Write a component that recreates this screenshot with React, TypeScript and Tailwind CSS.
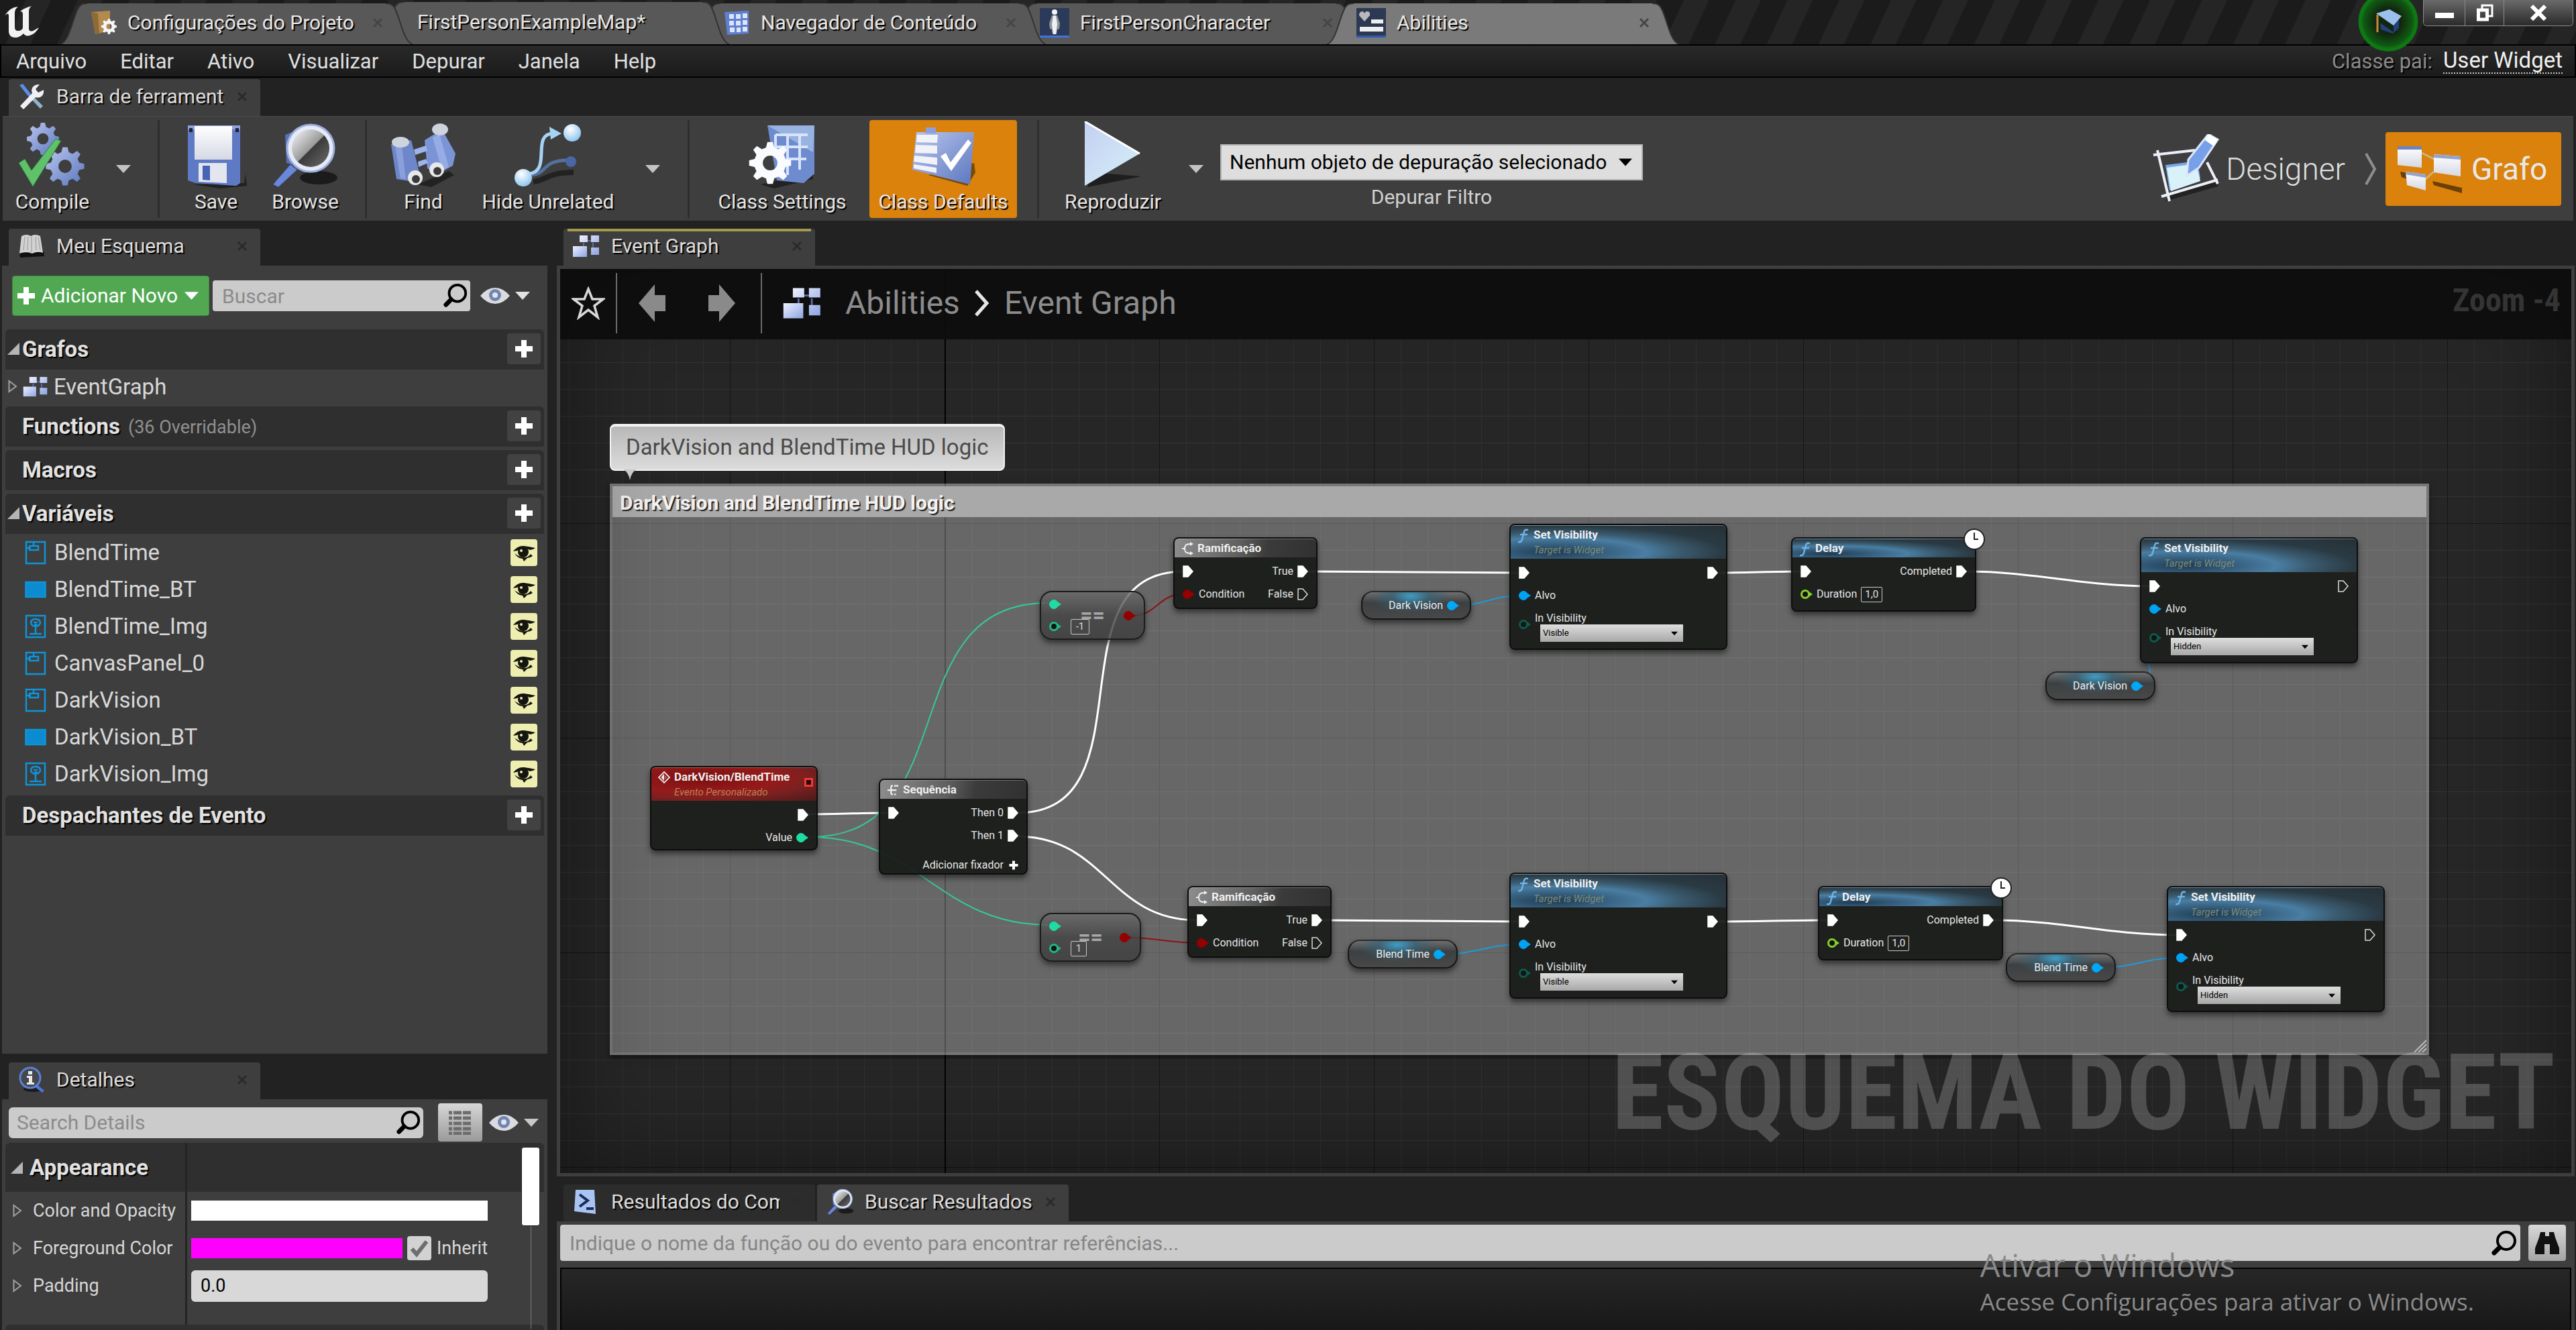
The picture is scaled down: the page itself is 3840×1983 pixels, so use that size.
import React from "react";

type Kids = { children?: React.ReactNode };

const shadowText = "[text-shadow:2px_2px_1px_#000]";

/* ---------- shared gradients ---------- */
function Gradients() {
  return (
    <svg className="absolute size-0" aria-hidden="true">
      <defs>
        <linearGradient id="steel" x1="0" y1="0" x2="1" y2="1">
          <stop offset="0" stopColor="#b9c6ee" />
          <stop offset="1" stopColor="#5c77bf" />
        </linearGradient>
        <linearGradient id="pale" x1="0" y1="0" x2="1" y2="1">
          <stop offset="0" stopColor="#eef2ff" />
          <stop offset="1" stopColor="#8ea4e2" />
        </linearGradient>
        <linearGradient id="ice" x1="0" y1="0" x2="1" y2="1">
          <stop offset="0" stopColor="#c3cff2" />
          <stop offset="1" stopColor="#d6f2f8" />
        </linearGradient>
        <linearGradient id="sheet" x1="0" y1="0" x2="0" y2="1">
          <stop offset="0" stopColor="#ffffff" />
          <stop offset="1" stopColor="#d5d8e4" />
        </linearGradient>
        <linearGradient id="lens" x1="0" y1="0" x2="1" y2="1">
          <stop offset="0" stopColor="#fafafa" />
          <stop offset="0.5" stopColor="#9a9a9a" />
          <stop offset="0.52" stopColor="#3b3b3b" />
          <stop offset="1" stopColor="#6d6d6d" />
        </linearGradient>
        <radialGradient id="ball" cx="0.4" cy="0.3" r="0.7">
          <stop offset="0" stopColor="#ffffff" />
          <stop offset="1" stopColor="#8ec6ef" />
        </radialGradient>
        <radialGradient id="glow" cx="0.5" cy="0.5" r="0.5">
          <stop offset="0.45" stopColor="#12260f" />
          <stop offset="0.85" stopColor="#0f5a12" />
          <stop offset="1" stopColor="#128a17" />
        </radialGradient>
      </defs>
    </svg>
  );
}

const GEAR =
  "M44 4h12l3 12 9 4 11-7 8 8-7 11 4 9 12 3v12l-12 3-4 9 7 11-8 8-11-7-9 4-3 12H44l-3-12-9-4-11 7-8-8 7-11-4-9-12-3V44l12-3 4-9-7-11 8-8 11 7 9-4zM50 34a16 16 0 1 0 0 32a16 16 0 1 0 0-32z";

function CompileIcon() {
  return (
    <svg viewBox="0 0 104 100" className="h-[100px] w-[104px]" aria-hidden="true">
      <g transform="translate(12 0) scale(.52)"><path d={GEAR} fill="url(#steel)" fillRule="evenodd" /></g>
      <g transform="translate(40 36) scale(.62)"><path d={GEAR} fill="url(#steel)" fillRule="evenodd" /></g>
      <path d="M2 62l9-6 10 17 36-47 8 3L23 97z" fill="#5fc26a" stroke="#2c7d3a" />
    </svg>
  );
}
function SaveIcon() {
  return (
    <svg viewBox="0 0 92 96" className="h-[96px] w-[92px]" aria-hidden="true">
      <path d="M12 90l76-2 2-14 2 18-40 4z" fill="#222" />
      <path d="M4 2h78v86l-6 4-60-4-12-4z" fill="#5f7ac4" />
      <path d="M4 2h78v6H4z" fill="#8da3de" />
      <path d="M14 3h56v50H14z" fill="url(#sheet)" />
      <path d="M20 58h42v30l-42-2z" fill="#e3e6ee" />
      <path d="M26 62h11v22l-11-1z" fill="#4763b3" />
      <path d="M6 6h5v6H6zM75 6h5v6h-5z" fill="#223" />
    </svg>
  );
}
function BrowseIcon({ className = "h-[98px] w-[104px]" }: { className?: string }) {
  return (
    <svg viewBox="0 0 104 98" className={className} aria-hidden="true">
      <ellipse cx="72" cy="82" rx="28" ry="10" fill="#1b1b1b" />
      <path d="M4 92L30 62l10 8L12 96z" fill="#6b87d8" stroke="#3c4f92" />
      <path d="M22 18l10-4v48l-8-2z" fill="#5871b4" />
      <circle cx="60" cy="38" r="35" fill="#e6ebfa" stroke="#9fb0dd" strokeWidth="3" />
      <circle cx="60" cy="38" r="28" fill="url(#lens)" />
    </svg>
  );
}
function FindIcon() {
  return (
    <svg viewBox="0 0 104 98" className="h-[98px] w-[104px]" aria-hidden="true">
      <path d="M44 92l46-20 8 6-34 18z" fill="#222" />
      <path d="M4 32l30-6 12 48-8 14-26-4z" fill="#6e87c9" />
      <path d="M10 36l10-2 6 50-8-1z" fill="#9db1ea" opacity=".6" />
      <path d="M54 26l26-16 20 36-4 18-22 12-16-8z" fill="#7b94d6" />
      <path d="M66 22l10-6 14 50-10 5z" fill="#a9bcf0" opacity=".6" />
      <ellipse cx="18" cy="29" rx="13" ry="8" fill="#cfd3dd" />
      <ellipse cx="77" cy="10" rx="12" ry="9" fill="#cfd3dd" />
      <path d="M38 40l18-6 2 8-18 6zM44 58l12-4 3 6-14 6z" fill="#9fb3ea" />
      <circle cx="40" cy="82" r="11" fill="#e8e8ea" /><circle cx="41" cy="84" r="6" fill="#3a3a3a" />
      <circle cx="72" cy="70" r="11" fill="#e8e8ea" /><circle cx="73" cy="72" r="6" fill="#3a3a3a" />
    </svg>
  );
}
function HideIcon() {
  return (
    <svg viewBox="0 0 104 98" className="h-[98px] w-[104px]" aria-hidden="true">
      <path d="M30 88c20-2 20-14 60-14" stroke="#222" strokeWidth="8" fill="none" />
      <path d="M28 78c22-2 16-22 52-22" stroke="#55709f" strokeWidth="5" fill="none" />
      <circle cx="86" cy="58" r="8" fill="#4b66a4" />
      <path d="M24 76c34-4 2-60 36-60" stroke="#a5d3f4" strokeWidth="5" fill="none" />
      <path d="M54 6l18 10-16 9z" fill="#a5d3f4" />
      <circle cx="15" cy="82" r="13" fill="url(#ball)" />
      <circle cx="88" cy="15" r="13" fill="url(#ball)" />
    </svg>
  );
}
function SettingsIcon() {
  return (
    <svg viewBox="0 0 104 98" className="h-[98px] w-[104px]" aria-hidden="true">
      <path d="M20 92l78-20v12L40 98z" fill="#222" />
      <path d="M30 4h70v72L84 90 44 86z" fill="#6f8bcf" />
      <path d="M30 4h70l-2 40z" fill="#a9c4ea" opacity=".7" />
      <path d="M42 18h48M42 18v34M60 18v60M78 18v52M42 36h48M60 54h28" stroke="#d8e4fa" strokeWidth="4" fill="none" />
      <g transform="translate(0 26) scale(.68)"><path d={GEAR} fill="#fafbff" fillRule="evenodd" /></g>
    </svg>
  );
}
function DefaultsIcon() {
  return (
    <svg viewBox="0 0 104 92" className="h-[92px] w-[104px]" aria-hidden="true">
      <path d="M30 72l68-18 2 14-12 20z" fill="#7a4a08" />
      <path d="M12 8h86l-6 78L6 64z" fill="url(#steel)" />
      <path d="M26 1h15v9H26z" fill="#8ba0dc" />
      <path d="M13 12h31l-1 12-31-1zM11 27l32 1v12l-33-1zM9 43l34 3v11L8 52zM8 56l34 5v8L8 62z" fill="#f2f3f8" />
      <path d="M48 44l8-5 7 14 26-34 5 5-30 42z" fill="#fff" />
    </svg>
  );
}
function PlayIcon() {
  return (
    <svg viewBox="0 0 92 100" className="h-[100px] w-[92px]" aria-hidden="true">
      <path d="M8 98l8-22 72 6z" fill="#1e1e1e" />
      <path d="M4 0l82 48L4 96z" fill="url(#ice)" />
      <path d="M4 0l82 48" stroke="#fff" strokeWidth="3" />
    </svg>
  );
}
function DesignerIcon() {
  return (
    <svg viewBox="0 0 104 104" className="h-[104px] w-[104px]" aria-hidden="true">
      <path d="M20 100l78-22v-8L26 90z" fill="#222" />
      <path d="M20 46l48-6 4 26-46 18z" fill="#79a8ea" />
      <path d="M22 50l44-6 6 26-44 15z" fill="#d9f2fa" />
      <path d="M2 31l62-7M8 24l18 76M14 93l84-25M82 42l16 32" stroke="#eceff8" strokeWidth="4" />
      <path d="M54 38L84 0l14 8-28 42-18 12z" fill="#77a0e8" stroke="#dbe6fb" strokeWidth="3" />
      <path d="M84 0l14 8-6 10-13-9z" fill="#fff" />
    </svg>
  );
}
function GrafoIcon() {
  return (
    <svg viewBox="0 0 100 72" className="h-[72px] w-[100px]" aria-hidden="true">
      <path d="M54 54l44 10v8L56 60zM6 40l24 4v12L8 48z" fill="#6b3f05" />
      <path d="M38 12l20 10M56 40L38 56" stroke="#c9b48a" strokeWidth="3" />
      <path d="M2 2h36v32L2 30z" fill="url(#sheet)" /><path d="M2 2h36v5H2z" fill="#6f83bd" />
      <path d="M56 14l40 3v30l-40-6z" fill="url(#sheet)" /><path d="M56 14l40 3v5l-40-3z" fill="#93a3cf" />
      <path d="M14 40l30 4v24l-28-8z" fill="url(#sheet)" /><path d="M14 40l30 4v5l-30-5z" fill="#93a3cf" />
    </svg>
  );
}
function GraphIcon({ className = "h-9 w-10" }: { className?: string }) {
  return (
    <svg viewBox="0 0 40 34" className={className} aria-hidden="true">
      <path d="M16 9h16M30 12v12M16 12v10" stroke="#5b6ea8" strokeWidth="2" />
      <path d="M10 1h12v10H10zM27 1h12v10H27zM27 19h12v11H27z" fill="url(#pale)" />
      <path d="M0 17h21v16H0z" fill="url(#pale)" />
    </svg>
  );
}
function ToolsIcon() {
  return (
    <svg viewBox="0 0 40 40" className="size-10" aria-hidden="true">
      <path d="M2 3l5-2 15 19-4 3z" fill="#5d8ee6" />
      <path d="M18 22l4-3 15 15-4 4z" fill="#8fb4c9" />
      <path d="M3 34l18-19c-3-8 3-14 11-13l-6 7 4 5 8-4c1 9-5 13-12 11L8 39z" fill="#eef0f5" />
    </svg>
  );
}
function BookIcon() {
  return (
    <svg viewBox="0 0 40 36" className="h-9 w-10" aria-hidden="true">
      <path d="M2 28l36-2 1 7-36 2z" fill="#111" />
      <path d="M5 3q8-4 14 0 6-4 14 0l4 25q-8-3-16 1-9-4-19 0z" fill="#d2d2d2" />
      <path d="M10 4L8 24M15 4l-1 20M20 4v23M26 4l1 20M30 5l3 19" stroke="#a9a9a9" strokeWidth="1.500" />
    </svg>
  );
}
function InfoIcon() {
  return (
    <svg viewBox="0 0 40 40" className="size-10" aria-hidden="true">
      <ellipse cx="22" cy="34" rx="14" ry="4" fill="#1b1b1b" />
      <path d="M27 26l12 10-3 3-12-9z" fill="#4b78d8" />
      <circle cx="18" cy="17" r="15" fill="#45474d" stroke="#5c80d8" strokeWidth="3" />
      <path d="M15 7h6v5h-6zM13 14h8v10h3v3H13v-3h3v-7h-3z" fill="#e9e9ec" />
    </svg>
  );
}
function CompilerIcon() {
  return (
    <svg viewBox="0 0 36 40" className="h-10 w-9" aria-hidden="true">
      <path d="M4 2h28l2 36-32-4z" fill="#a9c3f3" />
      <path d="M10 9l12 9-12 9" stroke="#1d2c55" strokeWidth="4" fill="none" />
      <path d="M20 30h11" stroke="#1d2c55" strokeWidth="4" />
    </svg>
  );
}
function FolderGearIcon() {
  return (
    <svg viewBox="0 0 40 38" className="h-[38px] w-10" aria-hidden="true">
      <path d="M2 3l28-2v30L8 36z" fill="#b38a4d" />
      <path d="M2 3l10 2 2 30-6 1z" fill="#8e6a35" />
      <g transform="translate(16 12) scale(.25)"><path d={GEAR} fill="#f5f6fa" fillRule="evenodd" /></g>
    </svg>
  );
}
function GridAppIcon() {
  return (
    <svg viewBox="0 0 40 38" className="h-[38px] w-10" aria-hidden="true">
      <path d="M2 3l36-2v34l-32 2z" fill="#5f7fd0" />
      <path d="M9 6h7v7H9zM19 6h7v7h-7zM29 5h7v7h-7zM9 16h7v7H9zM19 16h7v7h-7zM29 15h7v7h-7zM10 26h7v7h-7zM20 26h6v7h-6zM29 25h7v7h-7z" fill="#dbe6fd" />
    </svg>
  );
}
function CharacterIcon() {
  return (
    <svg viewBox="0 0 44 44" className="size-11" aria-hidden="true">
      <path d="M0 0h44v44H0z" fill="#2b3a58" /><path d="M0 41h44v3H0z" fill="#3f74dd" />
      <circle cx="22" cy="6" r="4" fill="#f4f4f6" />
      <path d="M18 11h8l4 12-1 8-3 1-1 7h-6l-1-7-3-1-1-8z" fill="#8f959f" />
      <path d="M20 11h4l2 13-2 15h-4l-2-15z" fill="#f0f0f2" />
    </svg>
  );
}
function WidgetIcon() {
  return (
    <svg viewBox="0 0 44 44" className="size-11" aria-hidden="true">
      <path d="M0 0h44v44H0z" fill="#2d3952" /><path d="M0 41h44v3H0z" fill="#2f5bb5" />
      <path d="M12 20L4 11q0-6 5-6 2 0 3 3 1-3 4-3 5 0 4 6z" fill="#b9b9bd" />
      <path d="M22 17h18v6H22zM5 28h35v7H5z" fill="#eeeeef" />
    </svg>
  );
}
function UnrealLogo() {
  return (
    <svg viewBox="0 0 56 52" className="h-[52px] w-14" aria-hidden="true">
      <path d="M3 17C8 8 14 4 23 3c-3 2-5 5-5 9v22c0 3 2 5 5 5 3 0 5-1 7-4V14c0-3-1-4-4-4 5-4 10-6 17-8-3 2-4 5-4 8v26c0 3 3 5 8 2l7-4c-4 7-8 10-14 12-4 1-7 0-9-3-4 4-8 6-12 6-7 0-10-4-10-10V17c0-4-2-5-6 0z" fill="#f2f2f2" />
    </svg>
  );
}
function Magnifier({ className = "size-10" }: { className?: string }) {
  return (
    <svg viewBox="0 0 40 40" className={className} aria-hidden="true">
      <circle cx="23" cy="16" r="13" fill="none" stroke="#000" strokeWidth="4" />
      <path d="M13 26L5 34" stroke="#000" strokeWidth="7" strokeLinecap="round" />
    </svg>
  );
}
function EyeIcon() {
  return (
    <svg viewBox="0 0 44 26" className="h-[26px] w-11" aria-hidden="true">
      <path d="M0 13Q10 1 22 1t22 12Q34 25 22 25T0 13z" fill="#d9dbe0" />
      <circle cx="22" cy="12" r="9" fill="#7286ad" /><circle cx="22" cy="12" r="4" fill="#dfe5f2" />
    </svg>
  );
}
function DownArrow({ className = "h-3 w-[22px] text-[#c4c4c4]" }: { className?: string }) {
  return (
    <svg viewBox="0 0 22 12" className={className} aria-hidden="true">
      <path d="M0 0h22L11 12z" fill="currentColor" />
    </svg>
  );
}
function PlusGlyph({ className = "size-7" }: { className?: string }) {
  return (
    <svg viewBox="0 0 28 28" className={className} aria-hidden="true">
      <path d="M10 1h8v9h9v8h-9v9h-8v-9H1v-8h9z" fill="#fff" />
    </svg>
  );
}
function OpenArrow() {
  return (
    <svg viewBox="0 0 18 18" className="size-[18px] shrink-0" aria-hidden="true">
      <path d="M18 0v18H0z" fill="#b5b5b5" />
    </svg>
  );
}
function ClosedArrow() {
  return (
    <svg viewBox="0 0 14 20" className="h-5 w-3.5 shrink-0" aria-hidden="true">
      <path d="M1.500 2v16L12 10z" fill="none" stroke="#a0a0a0" strokeWidth="2" />
    </svg>
  );
}
function CloseX({ className = "text-[#262626]" }: { className?: string }) {
  return (
    <button aria-label="Fechar" className={`shrink-0 ${className}`}>
      <svg viewBox="0 0 16 16" className="size-4" aria-hidden="true">
        <path d="M1 3l2-2 5 5 5-5 2 2-5 5 5 5-2 2-5-5-5 5-2-2 5-5z" fill="currentColor" />
      </svg>
    </button>
  );
}

/* ---------- window title bar ---------- */
function TabEdge({ flip, color }: { flip?: boolean; color: string }) {
  return (
    <svg viewBox="0 0 40 61" className={`h-full w-10 shrink-0 ${flip ? "-scale-x-100" : ""}`} preserveAspectRatio="none" aria-hidden="true">
      <path d="M0 61C16 56 20 10 30 3Q33 0 40 0V61z" fill={color} />
      <path d="M0 61C16 56 20 10 30 3Q33 0 40 0" fill="none" stroke="#333" strokeWidth="2" />
    </svg>
  );
}
function WindowTab({ icon, label, active, z, main }: { icon?: React.ReactNode; label: string; active?: boolean; z: string; main?: boolean }) {
  const color = active ? "#7a7a7a" : "#585858";
  return (
    <div className={`relative -mr-[53px] flex w-[525px] ${main ? "h-[63px]" : "h-[61px]"} ${z}`}>
      <TabEdge color={color} />
      <div className={`flex min-w-0 flex-1 items-center pb-1 ${active ? "bg-[#7a7a7a]" : "bg-[#585858]"}`}>
        <button className={`flex min-w-0 flex-1 items-center gap-4 text-left leading-10 whitespace-nowrap text-[#e6e6e6] ${shadowText} ${main ? "pl-5" : "pl-1"}`}>
          {icon}
          <span>{label}</span>
        </button>
        {!main && <CloseX className="mr-1 text-[#454545]" />}
      </div>
      <TabEdge color={color} flip />
    </div>
  );
}
function TitleBar() {
  return (
    <header className="relative flex h-[66px] shrink-0 items-end bg-[repeating-linear-gradient(115deg,#1b1b1b_0_34px,#252525_36px_68px,#1b1b1b_70px)]">
      <div className="w-[90px] self-center pl-1"><UnrealLogo /></div>
      <WindowTab z="z-40" icon={<FolderGearIcon />} label="Configurações do Projeto" />
      <WindowTab z="z-30" label="FirstPersonExampleMap*" main />
      <WindowTab z="z-20" icon={<GridAppIcon />} label="Navegador de Conteúdo" />
      <WindowTab z="z-10" icon={<CharacterIcon />} label="FirstPersonCharacter" />
      <WindowTab z="z-50" icon={<WidgetIcon />} label="Abilities" active />
      <button aria-label="Tutoriais" className="absolute top-0 right-[234px] z-10">
        <svg viewBox="0 0 92 80" className="h-20 w-[92px]" aria-hidden="true">
          <circle cx="46" cy="32" r="43" fill="url(#glow)" stroke="#0c7a12" strokeWidth="3" />
          <path d="M34 34l20 14v-12l8-8v14l-9 8-18-6z" fill="#22407c" />
          <path d="M28 20l20-6 18 10-12 14z" fill="#9cc0ec" />
          <path d="M30 22v26" stroke="#c98a3a" strokeWidth="3" />
        </svg>
      </button>
      <div className="mr-1 ml-auto flex h-[39px] self-start overflow-hidden rounded-b-md border border-t-0 border-[#8a8a8a] [&>button]:flex [&>button]:items-center [&>button]:justify-center [&>button]:bg-linear-to-b [&>button]:from-[#6a6a6a] [&>button]:to-[#2b2b2b]">
        <button aria-label="Minimizar" className="w-[62px] border-r border-[#8a8a8a]"><span className="mt-2 h-2 w-7 bg-white" /></button>
        <button aria-label="Restaurar" className="w-[58px] border-r border-[#8a8a8a]">
          <svg viewBox="0 0 26 26" className="size-[26px]" aria-hidden="true"><path d="M9 8V2h15v16h-5" fill="none" stroke="#fff" strokeWidth="3" /><path d="M3.500 9h13v14h-13z" fill="none" stroke="#fff" strokeWidth="5" /></svg>
        </button>
        <button aria-label="Fechar janela" className="w-[102px]">
          <svg viewBox="0 0 26 24" className="h-6 w-[26px]" aria-hidden="true"><path d="M3 2l20 20M23 2L3 22" stroke="#fff" strokeWidth="6" /></svg>
        </button>
      </div>
    </header>
  );
}

function MenuBar() {
  return (
    <nav className="flex h-[50px] shrink-0 items-center border-2 border-black bg-linear-to-b from-[#292929] to-[#1b1b1b] pr-[18px] pl-[22px] text-[31px] text-[#e0e0e0]">
      <ul className="flex gap-[50px]">
        {["Arquivo", "Editar", "Ativo", "Visualizar", "Depurar", "Janela", "Help"].map((m) => (
          <li key={m}><button>{m}</button></li>
        ))}
      </ul>
      <span className={`ml-auto text-[#8a8a8a] ${shadowText}`}>Classe pai:</span>
      <a href="#user-widget" className="ml-4 border-b-2 border-dotted border-[#c8c8c8] text-[33px] leading-9 text-[#f0f0f0]">User Widget</a>
    </nav>
  );
}

/* ---------- docking tabs ---------- */
function DockTab({ icon, label, tone = "bg-[#3e3e3e]", accent }: { icon: React.ReactNode; label: string; tone?: string; accent?: boolean }) {
  return (
    <div className={`relative flex h-[55px] w-[375px] shrink-0 items-center rounded-t-sm pb-1 ${tone}`}>
      {accent && <span className="absolute inset-x-1.5 top-0 h-1 bg-[#a39a4e]" />}
      <button className={`flex flex-1 items-center pl-3.5 text-left leading-10 whitespace-nowrap text-[#dcdcdc] ${shadowText}`}>
        <span className="flex w-[57px] shrink-0">{icon}</span>
        <span className="w-[251px] overflow-hidden">{label}</span>
      </button>
      <CloseX className="mr-[26px] ml-[18px] text-[#2a2a2a]" />
    </div>
  );
}

/* ---------- toolbar ---------- */
function Tool({ icon, label, className }: { icon: React.ReactNode; label: string; className: string }) {
  return (
    <button className={`flex h-[146px] shrink-0 flex-col items-center justify-end rounded-sm pb-1 whitespace-nowrap text-[#e4e4e4] ${shadowText} ${className}`}>
      {icon}
      <span className="leading-10">{label}</span>
    </button>
  );
}
const Sep = ({ className }: { className: string }) => <div className={`h-[146px] w-[3px] shrink-0 bg-[#2e2e2e] ${className}`} />;
const MoreButton = ({ className }: { className: string }) => (
  <button aria-label="Mais opções" className={`flex h-[146px] w-10 shrink-0 items-center justify-center ${className}`}><DownArrow /></button>
);
function Toolbar() {
  return (
    <section className="mx-1 flex h-[156px] shrink-0 items-center border-t border-[#4a4a4a] bg-[#3e3e3e]">
      <Tool className="ml-2.5 w-[128px]" icon={<CompileIcon />} label="Compile" />
      <MoreButton className="ml-[22px]" />
      <Sep className="ml-[31px]" />
      <Tool className="ml-9 w-24" icon={<SaveIcon />} label="Save" />
      <Tool className="ml-5 w-[130px]" icon={<BrowseIcon />} label="Browse" />
      <Sep className="ml-6" />
      <Tool className="ml-9 w-24" icon={<FindIcon />} label="Find" />
      <Tool className="ml-7 w-[220px]" icon={<HideIcon />} label="Hide Unrelated" />
      <MoreButton className="ml-[26px]" />
      <Sep className="ml-8" />
      <Tool className="ml-7 w-[220px]" icon={<SettingsIcon />} label="Class Settings" />
      <Tool className="ml-5 w-[220px] bg-[#da820b]" icon={<DefaultsIcon />} label="Class Defaults" />
      <Sep className="ml-[30px]" />
      <Tool className="ml-[30px] w-[160px]" icon={<PlayIcon />} label="Reproduzir" />
      <MoreButton className="ml-6" />
      <div className="ml-4 flex flex-col items-center pt-[30px] text-[#d0d0d0]">
        <div className="relative w-[630px]">
          <select id="debug" defaultValue="n" className="h-[54px] w-full appearance-none border-2 border-[#b4b4b4] bg-[#dedede] pl-3 text-black">
            <option value="n">Nenhum objeto de depuração selecionado</option>
          </select>
          <DownArrow className="pointer-events-none absolute top-[21px] right-4 h-3 w-5 text-black" />
        </div>
        <label htmlFor="debug" className="leading-[50px]">Depurar Filtro</label>
      </div>
      <div className="ml-auto flex items-center pr-[18px] text-[46px]">
        <button className="flex items-center gap-1.5 font-light text-[#dedede]"><DesignerIcon />Designer</button>
        <svg viewBox="0 0 20 50" className="mx-3 ml-7 h-[50px] w-5" aria-hidden="true"><path d="M3 2l13 23L3 48" fill="none" stroke="#8e8e8e" strokeWidth="4" /></svg>
        <button className="flex h-[110px] w-[262px] items-center gap-3 rounded-sm bg-[#da820b] pl-4 text-[#e8e8e8]"><GrafoIcon />Grafo</button>
      </div>
    </section>
  );
}

/* ---------- My Blueprint ---------- */
function SectionHead({ title, note, open }: { title: string; note?: string; open?: boolean }) {
  return (
    <div className="flex h-[60px] items-center rounded-t-md bg-[#2f2f2f] pr-[5px] pb-0.5 pl-[3px]">
      <span className="flex w-[22px]">{open && <OpenArrow />}</span>
      <h3 className={`text-[33px] font-bold text-[#e2e2e2] ${shadowText}`}>{title}</h3>
      {note && <span className="mt-1 ml-3 text-[27px] text-[#909090]">{note}</span>}
      <button aria-label={`Adicionar ${title}`} className="ml-auto flex h-[46px] w-[50px] items-center justify-center rounded-sm bg-[#424242]"><PlusGlyph /></button>
    </div>
  );
}
function VarIcon({ kind }: { kind: "panel" | "bar" | "image" }) {
  return (
    <svg viewBox="0 0 32 36" className="h-9 w-8 shrink-0" aria-hidden="true" fill="none" stroke="#0e94d8" strokeWidth="2.500">
      {kind === "bar" ? (
        <path d="M1.500 7h29v22h-29z" fill="#0c8bd0" />
      ) : (
        <path d="M2 2h28v32H2z" />
      )}
      {kind === "panel" && <path d="M3 11h6M7 8h13v6H7zM13 8V3" />}
      {kind === "image" && <path d="M7 29h18M16 28V14M9 13q0-6 7-6t7 6q-1 4-7 5-6-1-7-5zM13 12h6M14 16h5" />}
    </svg>
  );
}
function VisibleToggle() {
  return (
    <button aria-label="Alternar visibilidade" className="ml-auto flex h-10 w-10 items-center justify-center rounded-sm bg-[#eeeeb0]">
      <svg viewBox="0 0 36 28" className="h-7 w-9" aria-hidden="true">
        <path d="M2 12Q9 3 18 4q8 1 17 3-4 3-8 3Q18 5 8 11z" fill="#151510" />
        <circle cx="17" cy="13" r="8" fill="#151510" />
        <circle cx="14" cy="11" r="2" fill="#eeeeb0" />
        <path d="M4 15q6 5 13 6t11-5l3 3q-4 3-8 3l-5 5-2-4q-8-1-12-8z" fill="#151510" />
      </svg>
    </button>
  );
}
const variables: { name: string; kind: "panel" | "bar" | "image" }[] = [
  { name: "BlendTime", kind: "panel" },
  { name: "BlendTime_BT", kind: "bar" },
  { name: "BlendTime_Img", kind: "image" },
  { name: "CanvasPanel_0", kind: "panel" },
  { name: "DarkVision", kind: "panel" },
  { name: "DarkVision_BT", kind: "bar" },
  { name: "DarkVision_Img", kind: "image" },
];
function SchemaPanel() {
  return (
    <section className="flex min-h-0 flex-1 flex-col">
      <div className="pl-2.5"><DockTab icon={<BookIcon />} label="Meu Esquema" /></div>
      <div className="flex min-h-0 flex-1 flex-col bg-[#3e3e3e] px-[5px] pt-[15px]">
        <div className="mb-5 flex h-[60px] items-center pl-2.5">
          <button className="flex h-[60px] w-[294px] items-center rounded-sm border border-[#3d8a3f] bg-[#52a852] pl-1.5 whitespace-nowrap text-white">
            <PlusGlyph className="mr-2 size-7" />Adicionar Novo
            <DownArrow className="ml-2.5 h-3 w-[21px] text-white" />
          </button>
          <div className="relative ml-[5px]">
            <input aria-label="Buscar" placeholder="Buscar" className="h-[46px] w-[384px] rounded-sm bg-[#cbcbcb] pl-3.5 placeholder:text-[#8b8b8b]" />
            <Magnifier className="pointer-events-none absolute top-1 right-0.5 h-[38px] w-10" />
          </div>
          <button aria-label="Opções de exibição" className="ml-[15px] flex items-center gap-2"><EyeIcon /><DownArrow className="h-3 w-[22px] text-[#e2e2e2]" /></button>
        </div>
        <SectionHead title="Grafos" open />
        <div className="mb-[5px] flex h-[50px] items-center pl-1 text-[33px] text-[#d8d8d8]">
          <ClosedArrow /><GraphIcon className="mx-[7px] h-[31px] w-10" />EventGraph
        </div>
        <div className="flex flex-col gap-[5px]">
          <SectionHead title="Functions" note="(36 Overridable)" />
          <SectionHead title="Macros" />
          <SectionHead title="Variáveis" open />
        </div>
        <ul className="mb-[5px]">
          {variables.map((v) => (
            <li key={v.name} className="flex h-[55px] items-center pr-2.5 pl-[29px] text-[33px] text-[#d8d8d8]">
              <VarIcon kind={v.kind} /><span className="ml-3">{v.name}</span><VisibleToggle />
            </li>
          ))}
        </ul>
        <SectionHead title="Despachantes de Evento" />
      </div>
    </section>
  );
}

/* ---------- Details ---------- */
function PropRow({ label, id, children }: Kids & { label: string; id: string }) {
  return (
    <div className="flex h-14 items-center">
      <label htmlFor={id} className="flex w-[270px] items-center gap-4 pl-[11px] text-[27px] whitespace-nowrap text-[#d6d6d6]"><ClosedArrow />{label}</label>
      <div className="ml-[7px] flex w-[442px] items-center">{children}</div>
    </div>
  );
}
function DetailsPanel() {
  return (
    <section className="flex h-[412px] shrink-0 flex-col pt-[13px]">
      <div className="pl-2.5"><DockTab icon={<InfoIcon />} label="Detalhes" /></div>
      <div className="min-h-0 flex-1 overflow-hidden bg-[#3e3e3e] px-[5px]">
        <div className="flex h-[65px] items-center pt-1 pl-[5px]">
          <div className="relative">
            <input aria-label="Search Details" placeholder="Search Details" className="h-[46px] w-[618px] rounded-md bg-[#cbcbcb] pl-3 placeholder:text-[#8b8b8b]" />
            <Magnifier className="pointer-events-none absolute top-1 right-0.5 h-[38px] w-10" />
          </div>
          <button aria-label="Exibir em grade" className="ml-[22px] flex h-[57px] w-[66px] items-center justify-center rounded-sm bg-linear-to-b from-[#d8d8d8] to-[#9a9a9a]">
            <svg viewBox="0 0 34 36" className="h-9 w-[34px]" aria-hidden="true"><path d="M0 3h5M7 3h12M21 3h12M0 11h5M7 11h12M21 11h12M0 19h5M7 19h12M21 19h12M0 27h5M7 27h12M21 27h12M0 34h5M7 34h12M21 34h12" stroke="#6c6c6c" strokeWidth="5" /></svg>
          </button>
          <button aria-label="Opções de detalhes" className="ml-2.5 flex items-center gap-2"><EyeIcon /><DownArrow className="h-3 w-[22px] text-[#c8c8c8]" /></button>
        </div>
        <div className="relative h-[271px]">
          <div className="flex h-[73px] items-center rounded-t-md bg-[#2f2f2f] pl-2">
            <OpenArrow /><h3 className={`ml-2.5 text-[33px] font-bold text-[#e2e2e2] ${shadowText}`}>Appearance</h3>
          </div>
          <PropRow label="Color and Opacity" id="color"><button id="color" aria-label="Color and Opacity" className="h-[30px] flex-1 bg-white" /></PropRow>
          <PropRow label="Foreground Color" id="fg">
            <button id="fg" aria-label="Foreground Color" className="h-[30px] w-[315px] bg-[#ff00ff]" />
            <label className="ml-[7px] flex items-center text-[27px] text-[#d6d6d6]">
              <span className="relative mr-2 flex">
                <input type="checkbox" defaultChecked className="size-9 appearance-none rounded-sm bg-[#d2d2d2]" />
                <svg viewBox="0 0 36 36" className="pointer-events-none absolute inset-0" aria-hidden="true"><path d="M7 19l7 8L29 8" fill="none" stroke="#6e6e6e" strokeWidth="6" /></svg>
              </span>
              Inherit
            </label>
          </PropRow>
          <PropRow label="Padding" id="pad"><input id="pad" defaultValue="0.0" className="h-[47px] w-full rounded-md bg-[#d8d8d8] pl-3.5 text-[27px] text-black" /></PropRow>
          <div className="absolute top-0 left-[268px] h-full w-[3px] bg-[#242424]" />
          <div className="absolute top-1.5 right-1.5 flex h-full w-[28px] flex-col items-center">
            <div className="h-[118px] w-[28px] shrink-0 rounded-sm border border-[#222] bg-white" />
            <div className="w-px flex-1 bg-[#7b7b7b]" />
          </div>
        </div>
        <div className="h-2 rounded-t-md bg-[#2f2f2f]" />
      </div>
    </section>
  );
}

/* ---------- graph nodes ---------- */
function ExecPin({ hollow }: { hollow?: boolean }) {
  return (
    <svg viewBox="0 0 16 18" className="h-[18px] w-4 shrink-0" aria-hidden="true">
      <path d="M1 1h7l7 8-7 8H1z" fill={hollow ? "none" : "#fff"} stroke={hollow ? "#d8d8d8" : "#fff"} strokeWidth="1.500" />
    </svg>
  );
}
function DataPin({ color, hollow }: { color: string; hollow?: boolean }) {
  return (
    <svg viewBox="0 0 18 14" className="h-3.5 w-[18px] shrink-0" aria-hidden="true">
      <circle cx="7" cy="7" r={hollow ? 5.5 : 6.5} fill={hollow ? "#131413" : color} stroke={color} strokeWidth={hollow ? 3 : 1} />
      <path d="M13 3.500l5 3.500-5 3.500z" fill={color} />
    </svg>
  );
}
const headTones = {
  gray: "bg-[linear-gradient(100deg,#8d8d8d_0%,#606060_45%,#3a3b3a_65%,#303130_100%)]",
  blue: "bg-[radial-gradient(ellipse_at_20%_80%,#1f3b52_0%,#4a7ea3_38%,#3a5a6e_52%,#2a3a43_70%,#263036_100%)]",
  red: "bg-[radial-gradient(ellipse_at_30%_30%,#7a1010_0%,#961a1a_45%,#7d2020_65%,#4a1a1a_100%)]",
};
function Node({ at, tone, icon, title, sub, children, badge }: Kids & { at: string; tone: keyof typeof headTones; icon: React.ReactNode; title: string; sub?: string; badge?: React.ReactNode }) {
  return (
    <article className={`absolute rounded-lg border-2 border-[#0c0d0c] bg-[#1a1c1af2] text-base text-[#e6e6e6] shadow-[0_5px_8px_rgba(0,0,0,0.5)] ${at}`}>
      <div className={`flex items-start gap-1.5 rounded-t-md border-t border-white/30 pl-2.5 ${sub ? "h-[50px]" : "h-7"} ${headTones[tone]}`}>
        <span className="mt-1 flex w-[18px] shrink-0 justify-center">{icon}</span>
        <div>
          <h4 className="text-[17px] leading-[26px] font-bold text-[#f0f0f0]">{title}</h4>
          {sub && <p className={`text-[15px] leading-5 italic ${tone === "red" ? "text-[#b98358]" : "text-[#7d8a77]"}`}>{sub}</p>}
        </div>
      </div>
      <div className="px-3 pt-1">{children}</div>
      {badge}
    </article>
  );
}
const Row = ({ children }: Kids) => <div className="flex h-[34px] items-center justify-between">{children}</div>;
const In = ({ children }: Kids) => <span className="flex items-center gap-1.5">{children}</span>;

const FuncIcon = () => (
  <svg viewBox="0 0 16 22" className="h-[22px] w-4" aria-hidden="true">
    <path d="M1 20q4 1 5-4l3-11q1-4 5-3M4 9h9" fill="none" stroke="#6cb4e8" strokeWidth="2.500" strokeLinecap="round" />
  </svg>
);
const BranchIcon = () => (
  <svg viewBox="0 0 18 20" className="h-5 w-[18px]" aria-hidden="true">
    <path d="M14 3C6 3 5 6 5 10s1 7 9 7M1 10h4" fill="none" stroke="#eee" strokeWidth="2" />
    <path d="M13 0l5 3-5 3zM13 14l5 3-5 3z" fill="#eee" />
  </svg>
);
const SequenceIcon = () => (
  <svg viewBox="0 0 20 20" className="size-5" aria-hidden="true">
    <path d="M1 10h11M7 3v14M7 3h3M7 17h3M12 3h7M12 10h4M12 17h3" stroke="#eee" strokeWidth="2.500" fill="none" />
  </svg>
);
const EventIcon = () => (
  <svg viewBox="0 0 20 20" className="size-5" aria-hidden="true">
    <path d="M10 1l9 9-9 9-9-9z" fill="none" stroke="#eee" strokeWidth="2" />
    <path d="M10 4v12l-5-6z" fill="#eee" /><path d="M11 6l4 4-4 4z" fill="#c55" />
  </svg>
);

const Branch = ({ at }: { at: string }) => (
  <Node at={`w-[215px] h-[107px] ${at}`} tone="gray" icon={<BranchIcon />} title="Ramificação">
    <Row><ExecPin /><In>True<ExecPin /></In></Row>
    <Row><In><DataPin color="#960000" />Condition</In><In>False<ExecPin hollow /></In></Row>
  </Node>
);
const SetVisibility = ({ at, value, linked, name }: { at: string; value: string; linked?: boolean; name: string }) => (
  <Node at={`w-[325px] h-[188px] ${at}`} tone="blue" icon={<FuncIcon />} title="Set Visibility" sub="Target is Widget">
    <Row><ExecPin /><ExecPin hollow={!linked} /></Row>
    <Row><In><DataPin color="#00a2f2" />Alvo</In></Row>
    <div className="flex items-center gap-1.5">
      <DataPin color="#0d5a4c" hollow />
      <div>
        <label htmlFor={name} className="block pt-2 leading-[18px]">In Visibility</label>
        <div className="relative ml-2">
          <select id={name} defaultValue={value} className="block h-[26px] w-[213px] appearance-none bg-linear-to-b from-[#dedede] to-[#a8a8a8] pl-1 text-[13px] text-black">
            <option>{value}</option>
          </select>
          <DownArrow className="pointer-events-none absolute top-[10px] right-2 h-[7px] w-2.5 text-black" />
        </div>
      </div>
    </div>
  </Node>
);
const Delay = ({ at }: { at: string }) => (
  <Node
    at={`w-[276px] h-[111px] ${at}`}
    tone="blue"
    icon={<FuncIcon />}
    title="Delay"
    badge={
      <svg viewBox="0 0 34 34" className="absolute -top-4 -right-4 size-[34px]" aria-hidden="true">
        <circle cx="17" cy="17" r="15" fill="#fff" stroke="#222" strokeWidth="2" />
        <path d="M17 7v10h6" fill="none" stroke="#222" strokeWidth="2" />
      </svg>
    }
  >
    <Row><ExecPin /><In>Completed<ExecPin /></In></Row>
    <Row>
      <In><DataPin color="#86d22a" hollow />Duration
        <input aria-label="Duration" defaultValue="1,0" className="h-[23px] w-8 rounded-xs border border-[#c8c8c8] text-center text-[15px]" />
      </In>
    </Row>
  </Node>
);
const Variable = ({ at, name }: { at: string; name: string }) => (
  <div className={`absolute flex h-[43px] w-[164px] items-center justify-end gap-1.5 rounded-[18px] border-2 border-[#161616] border-t-[#2b2b2b] bg-[radial-gradient(ellipse_60px_26px_at_45%_15%,#3f9cc4_0%,#35647ab0_45%,transparent_100%),linear-gradient(#6f6f6f,#3d4042_40%,#484848)] pr-4 text-base text-[#ececec] shadow-[0_5px_8px_rgba(0,0,0,0.5)] ${at}`}>
    {name}<DataPin color="#00a8f5" />
  </div>
);
const Equal = ({ at, value }: { at: string; value: string }) => (
  <div className={`absolute flex h-[73px] items-center justify-between rounded-[18px] border-2 border-[#1c1c1c] bg-linear-to-b from-[#6a6a6acc] via-[#434343cc] to-[#3c3c3ccc] px-3 text-[#d8d8d8] shadow-[0_5px_8px_rgba(0,0,0,0.5)] ${at}`}>
    <span className="absolute inset-x-0 top-4 text-center text-[32px] leading-9 font-bold text-[#a8a8a8]">==</span>
    <div className="relative flex flex-col">
      <span className="flex h-[33px] items-center"><DataPin color="#1fdca4" /></span>
      <span className="flex h-[33px] items-center gap-3.5">
        <DataPin color="#1fb88b" hollow />
        <input aria-label="Valor comparado" defaultValue={value} className={`h-[23px] rounded-xs border border-[#c8c8c8] text-center text-[15px] ${value.length > 1 ? "w-7" : "w-6"}`} />
      </span>
    </div>
    <DataPin color="#960000" />
  </div>
);

const WHITE = "#ffffff", TEAL = "#35c89a", RED = "#8a1414", BLUE = "#1f9ad8";
const wires: [number, number, number, number, string][] = [
  [369, 813, 489, 811, WHITE],
  [372, 847, 727, 498, TEAL],
  [372, 847, 727, 978, TEAL],
  [681, 811, 930, 451, WHITE],
  [681, 846, 950, 971, WHITE],
  [853, 517, 928, 485, RED],
  [848, 997, 949, 1005, RED],
  [1116, 451, 1429, 453, WHITE],
  [1336, 502, 1430, 487, BLUE],
  [1726, 453, 1849, 451, WHITE],
  [2097, 451, 2369, 473, WHITE],
  [2356, 622, 2370, 507, BLUE],
  [1137, 971, 1429, 973, WHITE],
  [1316, 1022, 1430, 1007, BLUE],
  [1726, 973, 1889, 971, WHITE],
  [2137, 971, 2409, 993, WHITE],
  [2298, 1042, 2410, 1027, BLUE],
];
function Wires() {
  return (
    <svg className="pointer-events-none absolute inset-0 size-full" aria-hidden="true">
      {wires.map(([x1, y1, x2, y2, color], i) => {
        const pull = (Math.abs(x2 - x1) + Math.abs(y2 - y1)) / 3;
        return (
          <path key={i} d={`M${x1} ${y1}C${x1 + pull} ${y1} ${x2 - pull} ${y2} ${x2} ${y2}`} fill="none" stroke={color} strokeWidth={color === WHITE ? 3 : 2} />
        );
      })}
    </svg>
  );
}

function GraphCanvas() {
  return (
    <div className="relative min-h-0 flex-1 overflow-hidden bg-[#262626]">
      <div className="absolute inset-0 bg-[linear-gradient(90deg,#303030_1px,transparent_1px),linear-gradient(#343434_1px,transparent_1px)] bg-[size:40px_40px] bg-[position:13px_19px]" />
      <div className="absolute inset-0 bg-[linear-gradient(90deg,#151515_1px,transparent_1px),linear-gradient(#151515_1px,transparent_1px)] bg-[size:320px_320px] bg-[position:253px_59px]" />
      <div className="absolute inset-y-0 left-[573px] w-0.5 bg-black" />

      <div className="absolute top-[320px] left-[74px] h-[852px] w-[2712px] border-4 border-white/10 bg-[#ffffff4d] shadow-[0_4px_8px_rgba(0,0,0,0.5)]">
        <h2 className="h-[46px] bg-[#a9a9a9] pl-[11px] text-[30px] leading-[50px] font-bold text-[#f2f2f2] [text-shadow:2px_2px_1px_#222]">DarkVision and BlendTime HUD logic</h2>
        <svg viewBox="0 0 20 20" className="absolute right-0 bottom-0 size-5" aria-hidden="true"><path d="M2 20L20 2M8 20L20 8M14 20l6-6" stroke="#bbb" strokeWidth="2" /></svg>
      </div>
      <div className="pointer-events-none absolute inset-0 shadow-[inset_0_0_140px_rgba(0,0,0,0.45)]" />

      <div className="absolute top-[231px] left-[74px] flex h-[70px] items-center rounded-lg border-2 border-t-4 border-[#f2f2f2] bg-linear-to-b from-[#b8b8b8] to-[#dcdcdc] px-[22px] pb-1 text-[33px] whitespace-nowrap text-[#4a4a4a]">
        DarkVision and BlendTime HUD logic
        <svg viewBox="0 0 20 16" className="absolute top-full left-[18px] h-4 w-5" aria-hidden="true"><path d="M0 0h20Q12 4 10 16 8 4 0 0z" fill="#c9c9c9" /></svg>
      </div>

      <Wires />
      <Node at="left-[134px] top-[741px] w-[250px] h-[126px]" tone="red" icon={<EventIcon />} title="DarkVision/BlendTime" sub="Evento Personalizado" badge={<span className="absolute top-4 right-[5px] size-[13px] border-[3px] border-[#ee3a3a] bg-[#2a0808]" />}>
        <div className="flex h-[34px] items-center justify-end"><ExecPin /></div>
        <div className="flex h-[34px] items-center justify-end gap-1.5">Value<DataPin color="#1fdca4" /></div>
      </Node>
      <Node at="left-[475px] top-[760px] w-[222px] h-[143px]" tone="gray" icon={<SequenceIcon />} title="Sequência">
        <Row><ExecPin /><In>Then 0<ExecPin /></In></Row>
        <div className="flex h-[34px] items-center justify-end"><In>Then 1<ExecPin /></In></div>
        <button className="ml-auto flex h-[54px] items-center gap-2 whitespace-nowrap">Adicionar fixador<PlusGlyph className="size-3.5" /></button>
      </Node>
      <Equal at="left-[715px] top-[480px] w-[157px]" value="-1" />
      <Equal at="left-[715px] top-[960px] w-[151px]" value="1" />
      <Branch at="left-[914px] top-[400px]" />
      <Branch at="left-[935px] top-[920px]" />
      <Variable at="left-[1194px] top-[480px]" name="Dark Vision" />
      <Variable at="left-[1174px] top-[1000px]" name="Blend Time" />
      <SetVisibility at="left-[1415px] top-[380px]" value="Visible" name="vis-1" linked />
      <SetVisibility at="left-[1415px] top-[900px]" value="Visible" name="vis-2" linked />
      <Delay at="left-[1835px] top-[400px]" />
      <Delay at="left-[1875px] top-[920px]" />
      <Variable at="left-[2214px] top-[600px]" name="Dark Vision" />
      <Variable at="left-[2155px] top-[1020px]" name="Blend Time" />
      <SetVisibility at="left-[2355px] top-[400px]" value="Hidden" name="vis-3" />
      <SetVisibility at="left-[2395px] top-[920px]" value="Hidden" name="vis-4" />

      <p className="pointer-events-none absolute right-6 bottom-[62px] font-['Roboto_Condensed',Roboto,sans-serif] text-[158px] leading-[116px] font-bold whitespace-nowrap text-white/20">ESQUEMA DO WIDGET</p>

      <div className="absolute inset-x-0 top-0 flex h-[105px] items-center bg-[#0c0c0ce6] pb-1 text-[48px] text-[#8c8c8c]">
        <button aria-label="Favorito" className="ml-[17px]">
          <svg viewBox="0 0 50 50" className="size-[50px]" aria-hidden="true"><path d="M25 4l6 15h16L34 29l5 17-14-11-14 11 5-17L3 19h16z" fill="none" stroke="#d8d8d8" strokeWidth="3.500" /></svg>
        </button>
        <div className="ml-4 h-[90px] w-0.5 bg-[#6a6a6a]" />
        <button aria-label="Voltar" className="ml-[30px]"><svg viewBox="0 0 44 56" className="h-14 w-11" aria-hidden="true"><path d="M2 28L26 0v16h16v24H26v16z" fill="#8a8a8a" /></svg></button>
        <button aria-label="Avançar" className="ml-[60px]"><svg viewBox="0 0 44 56" className="h-14 w-11" aria-hidden="true"><path d="M42 28L18 0v16H2v24h16v16z" fill="#8a8a8a" /></svg></button>
        <div className="ml-9 h-[90px] w-0.5 bg-[#6a6a6a]" />
        <GraphIcon className="ml-[30px] h-12 w-[60px]" />
        <a href="#abilities" className="ml-[34px]">Abilities</a>
        <svg viewBox="0 0 24 40" className="mx-[21px] h-10 w-6" aria-hidden="true"><path d="M3 2l16 18L3 38" fill="none" stroke="#e6e6e6" strokeWidth="5" /></svg>
        <a href="#event-graph">Event Graph</a>
        <span className="mr-4 mb-2 ml-auto font-['Roboto_Condensed',Roboto,sans-serif] font-bold text-[#343434]">Zoom -4</span>
      </div>
    </div>
  );
}

function ResultsPanel() {
  return (
    <section className="flex h-[217px] shrink-0 flex-col">
      <div className="flex gap-[3px] pl-2.5">
        <DockTab icon={<CompilerIcon />} label="Resultados do Compilador" tone="bg-[#2c2c2c]" />
        <DockTab icon={<BrowseIcon className="h-10 w-[42px]" />} label="Buscar Resultados" />
      </div>
      <div className="flex min-h-0 flex-1 flex-col bg-[#3e3e3e] px-[5px] pt-[5px]">
        <div className="flex h-[54px]">
          <div className="relative flex-1">
            <input aria-label="Buscar referências" placeholder="Indique o nome da função ou do evento para encontrar referências..." className="h-full w-full rounded-sm bg-[#cbcbcb] pl-3.5 placeholder:text-[#858585]" />
            <Magnifier className="pointer-events-none absolute top-2 right-1 size-10" />
          </div>
          <button aria-label="Buscar em todos os esquemas" className="mr-2 ml-3 flex w-14 items-center justify-center rounded-sm bg-linear-to-b from-[#d8d8d8] to-[#a5a5a5]">
            <svg viewBox="0 0 40 40" className="size-10" aria-hidden="true"><path d="M10 4h7v6h6V4h7l2 8 6 16v9H24V22h-8v15H2v-9l6-16z" fill="#111" /></svg>
          </button>
        </div>
        <div className="mt-2.5 flex-1 border-2 border-b-0 border-black bg-linear-to-b from-[#272727] to-[#181818]" />
      </div>
    </section>
  );
}

export default function App() {
  return (
    <div className="relative flex h-screen flex-col overflow-hidden bg-[#222222] font-[Roboto,sans-serif] text-[30px] leading-none">
      <Gradients />
      <TitleBar />
      <MenuBar />
      <div className="mt-0.5 pl-[13px]"><DockTab icon={<ToolsIcon />} label="Barra de ferramentas" /></div>
      <Toolbar />
      <main className="flex min-h-0 flex-1 gap-3.5 pt-3 pr-0.5 pl-[3px]">
        <aside className="flex w-[813px] shrink-0 flex-col"><SchemaPanel /><DetailsPanel /></aside>
        <div className="flex min-w-0 flex-1 flex-col gap-3">
          <section className="flex min-h-0 flex-1 flex-col">
            <div className="pl-2.5"><DockTab icon={<GraphIcon className="h-[34px] w-10" />} label="Event Graph" accent /></div>
            <div className="flex min-h-0 flex-1 flex-col border-[5px] border-[#3e3e3e]"><GraphCanvas /></div>
          </section>
          <ResultsPanel />
        </div>
      </main>
      <div className="pointer-events-none absolute right-[152px] bottom-[18px] font-['Open_Sans',sans-serif] text-[#8a8a8a]">
        <p className="text-[47px] leading-[62px]">Ativar o Windows</p>
        <p className="text-[35px] leading-[48px]">Acesse Configurações para ativar o Windows.</p>
      </div>
    </div>
  );
}
